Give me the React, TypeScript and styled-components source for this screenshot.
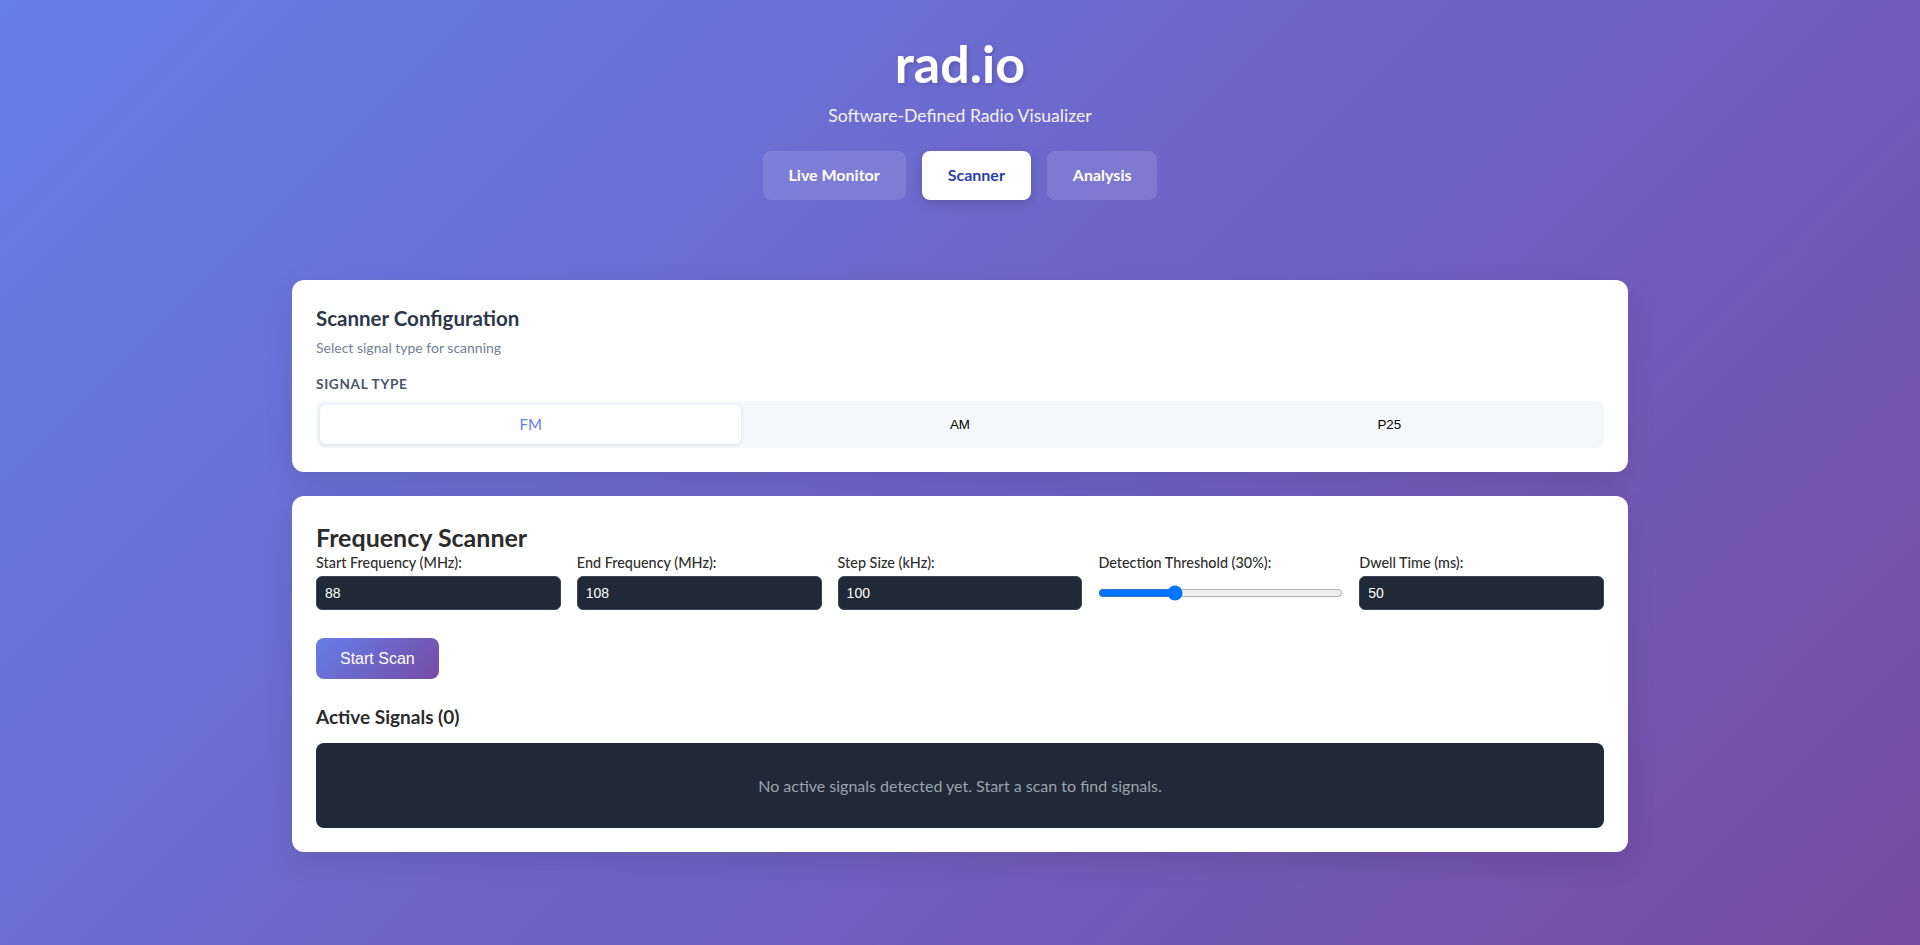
import React, { useState } from "react";
import styled, { createGlobalStyle } from "styled-components";

const GlobalStyle = createGlobalStyle`
  html, body {
    margin: 0;
    padding: 0;
  }
  body {
    font-family: Lato, "Noto Sans", sans-serif;
    background: linear-gradient(135deg, #667eea 0%, #764ba2 100%);
    min-height: 100vh;
    color: #2d3748;
  }
  * { box-sizing: border-box; }
`;

const Page = styled.div`
  min-height: 100vh;
  padding-top: 36px;
  padding-bottom: 40px;
`;

const Header = styled.header`
  text-align: center;
  color: #ffffff;
`;

const Title = styled.h1`
  margin: 0 0 14px;
  font-size: 52px;
  line-height: 54px;
  font-weight: 700;
  text-shadow: 2px 2px 4px rgba(0, 0, 0, 0.15);
`;

const Subtitle = styled.p`
  margin: 0 0 23px;
  font-size: 17.6px;
  line-height: 24px;
  opacity: 0.92;
`;

const Nav = styled.nav`
  display: flex;
  justify-content: center;
  gap: 16px;
`;

const NavButton = styled.button<{ $active?: boolean }>`
  font-family: Lato, "Noto Sans", sans-serif;
  font-size: 16px;
  font-weight: 700;
  line-height: 20.5px;
  padding: 12px 24px;
  border-radius: 8px;
  border: 2px solid transparent;
  cursor: pointer;
  background: ${(p) => (p.$active ? "#ffffff" : "rgba(255, 255, 255, 0.12)")};
  color: ${(p) => (p.$active ? "#2c3fa8" : "#ffffff")};
  box-shadow: ${(p) => (p.$active ? "0 4px 12px rgba(0, 0, 0, 0.15)" : "none")};
`;

const Main = styled.main`
  max-width: 1400px;
  margin: 80px auto 0;
  padding: 0 32px;
  display: flex;
  flex-direction: column;
  gap: 24px;
`;

const Card = styled.section`
  background: #ffffff;
  border-radius: 12px;
  padding: 24px;
  box-shadow: 0 10px 30px rgba(0, 0, 0, 0.1);
`;

const CardTitle = styled.h3`
  margin: 0 0 5px;
  font-size: 20.5px;
  line-height: 28px;
  font-weight: 700;
  color: #2d3748;
`;

const CardDescription = styled.p`
  margin: 0 0 17px;
  font-size: 14px;
  line-height: 21px;
  color: #718096;
`;

const FieldCaption = styled.div`
  font-size: 13.6px;
  line-height: 18px;
  font-weight: 700;
  letter-spacing: 0.05em;
  text-transform: uppercase;
  color: #4a5568;
  margin-bottom: 8px;
`;

const TabList = styled.div`
  display: grid;
  grid-template-columns: repeat(3, 1fr);
  gap: 8px;
  padding: 4px;
  background: #f5f8fb;
  border-radius: 8px;
`;

const Tab = styled.button<{ $active?: boolean }>`
  height: 39px;
  border: none;
  border-radius: 6px;
  cursor: pointer;
  background: ${(p) => (p.$active ? "#ffffff" : "transparent")};
  box-shadow: ${(p) => (p.$active ? "0 1px 4px rgba(0, 0, 0, 0.12)" : "none")};
  color: ${(p) => (p.$active ? "#667eea" : "#000000")};
  font-family: ${(p) => (p.$active ? 'Lato, "Noto Sans", sans-serif' : '"Liberation Sans", Arial, sans-serif')};
  font-size: ${(p) => (p.$active ? "15px" : "13.33px")};
  font-weight: 400;
`;

const ScannerTitle = styled.h2`
  margin: 0;
  font-size: 25px;
  line-height: 34px;
  font-weight: 700;
  color: #2b2b2b;
`;

const Controls = styled.div`
  display: grid;
  grid-template-columns: repeat(5, 1fr);
  gap: 16px;
  margin-bottom: 28px;
`;

const Field = styled.div`
  display: flex;
  flex-direction: column;
  gap: 5px;
`;

const Label = styled.label`
  font-size: 14.4px;
  line-height: 17px;
  font-weight: 500;
  color: #2d2d2d;
`;

const ControlSlot = styled.div`
  height: 34px;
  display: flex;
  align-items: center;
`;

const TextInput = styled.input`
  width: 100%;
  height: 34px;
  padding: 8px;
  border: 1px solid #3a4556;
  border-radius: 6px;
  background: #1f2937;
  color: #ffffff;
  font-family: "Liberation Sans", Arial, sans-serif;
  font-size: 14px;
  outline: none;
`;

const Range = styled.input`
  width: 100%;
  margin: 0;
`;

const ScanButton = styled.button`
  display: block;
  padding: 12px 24px;
  line-height: 17px;
  border: none;
  border-radius: 8px;
  background: linear-gradient(135deg, #667eea 0%, #764ba2 100%);
  color: #ffffff;
  font-family: "Liberation Sans", Arial, sans-serif;
  font-size: 16px;
  cursor: pointer;
`;

const SectionTitle = styled.h3`
  margin: 26px 0 14px;
  font-size: 19px;
  line-height: 24px;
  font-weight: 700;
  color: #2b2b2b;
`;

const EmptyBox = styled.div`
  background: #1f2937;
  border-radius: 8px;
  padding: 32px;
  text-align: center;
  font-size: 16px;
  line-height: 21px;
  color: #9ca3af;
`;

const navItems = ["Live Monitor", "Scanner", "Analysis"];
const signalTypes = ["FM", "AM", "P25"];

export default function App() {
  const [view, setView] = useState("Scanner");
  const [signal, setSignal] = useState("FM");
  const [threshold, setThreshold] = useState(30);

  return (
    <>
      <GlobalStyle />
      <Page>
        <Header>
          <Title>rad.io</Title>
          <Subtitle>Software-Defined Radio Visualizer</Subtitle>
          <Nav>
            {navItems.map((n) => (
              <NavButton key={n} $active={view === n} onClick={() => setView(n)}>
                {n}
              </NavButton>
            ))}
          </Nav>
        </Header>
        <Main>
          <Card>
            <CardTitle>Scanner Configuration</CardTitle>
            <CardDescription>Select signal type for scanning</CardDescription>
            <FieldCaption>Signal Type</FieldCaption>
            <TabList>
              {signalTypes.map((s) => (
                <Tab key={s} $active={signal === s} onClick={() => setSignal(s)}>
                  {s}
                </Tab>
              ))}
            </TabList>
          </Card>
          <Card>
            <ScannerTitle>Frequency Scanner</ScannerTitle>
            <Controls>
              <Field>
                <Label>Start Frequency (MHz):</Label>
                <ControlSlot>
                  <TextInput type="number" defaultValue={88} />
                </ControlSlot>
              </Field>
              <Field>
                <Label>End Frequency (MHz):</Label>
                <ControlSlot>
                  <TextInput type="number" defaultValue={108} />
                </ControlSlot>
              </Field>
              <Field>
                <Label>Step Size (kHz):</Label>
                <ControlSlot>
                  <TextInput type="number" defaultValue={100} />
                </ControlSlot>
              </Field>
              <Field>
                <Label>Detection Threshold ({threshold}%):</Label>
                <ControlSlot>
                  <Range
                    type="range"
                    min={0}
                    max={100}
                    value={threshold}
                    onChange={(e) => setThreshold(Number(e.target.value))}
                  />
                </ControlSlot>
              </Field>
              <Field>
                <Label>Dwell Time (ms):</Label>
                <ControlSlot>
                  <TextInput type="number" defaultValue={50} />
                </ControlSlot>
              </Field>
            </Controls>
            <ScanButton>Start Scan</ScanButton>
            <SectionTitle>Active Signals (0)</SectionTitle>
            <EmptyBox>No active signals detected yet. Start a scan to find signals.</EmptyBox>
          </Card>
        </Main>
      </Page>
    </>
  );
}
